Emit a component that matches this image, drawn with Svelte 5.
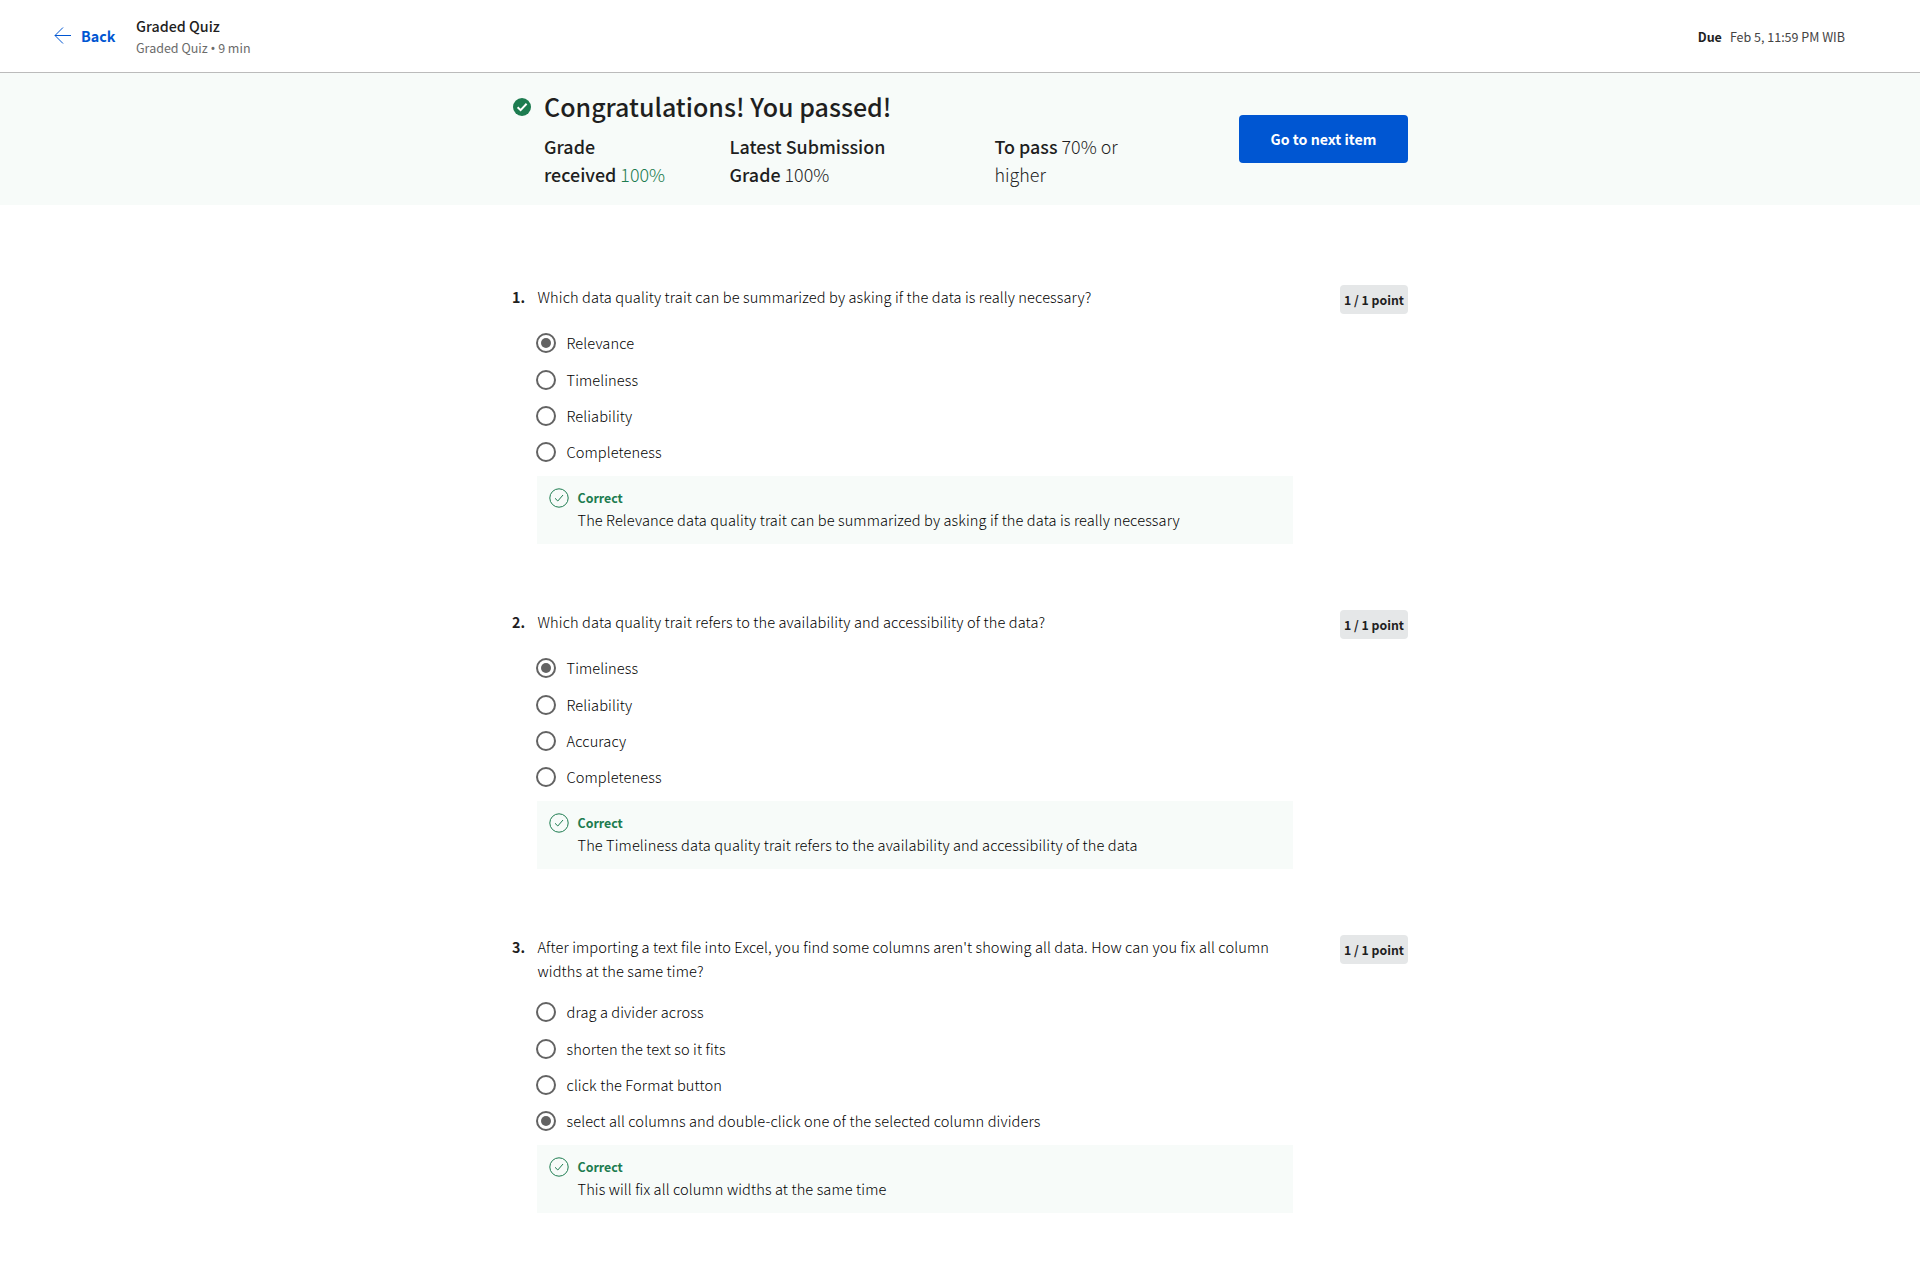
<script>
  const questions = [
    {
      text: 'Which data quality trait can be summarized by asking if the data is really necessary?',
      options: ['Relevance', 'Timeliness', 'Reliability', 'Completeness'],
      picked: 0,
      feedback: 'The Relevance data quality trait can be summarized by asking if the data is really necessary'
    },
    {
      text: 'Which data quality trait refers to the availability and accessibility of the data?',
      options: ['Timeliness', 'Reliability', 'Accuracy', 'Completeness'],
      picked: 0,
      feedback: 'The Timeliness data quality trait refers to the availability and accessibility of the data'
    },
    {
      text: "After importing a text file into Excel, you find some columns aren't showing all data. How can you fix all column widths at the same time?",
      options: [
        'drag a divider across',
        'shorten the text so it fits',
        'click the Format button',
        'select all columns and double-click one of the selected column dividers'
      ],
      picked: 3,
      feedback: 'This will fix all column widths at the same time'
    }
  ];
</script>

<div class="page">
  <header>
    <a class="back" href="#back">
      <svg width="18" height="18" viewBox="0 0 18 18" fill="none" stroke="#0056d2">
        <path d="M17 8.5H1M9 0.5L1 8.5L9 16.5" />
      </svg>
      <span>Back</span>
    </a>
    <div class="title">
      <div class="name">Graded Quiz</div>
      <div class="meta">Graded Quiz <span class="dot">•</span> 9 min</div>
    </div>
    <div class="due"><b>Due</b><span>Feb 5, 11:59 PM WIB</span></div>
  </header>

  <section class="banner">
    <svg class="tick" width="18" height="18" viewBox="0 0 18 18">
      <circle cx="9" cy="9" r="9" fill="#1d7c50" />
      <path d="M4.6 9.3L7.6 12.2L13.6 5.8" fill="none" stroke="#fff" stroke-width="2" />
    </svg>
    <div class="result">
      <h1>Congratulations! You passed!</h1>
      <div class="grades">
        <div class="g1"><b>Grade received</b> <span class="green">100%</span></div>
        <div class="g2"><b>Latest Submission Grade</b> 100%</div>
        <div class="g3"><b>To pass</b> 70% or higher</div>
      </div>
    </div>
    <button>Go to next item</button>
  </section>

  <main>
    {#each questions as q, i}
      <section class="question">
        <div class="num">{i + 1}.</div>
        <div class="body">
          <p class="prompt">{q.text}</p>
          <div class="options">
            {#each q.options as o, j}
              <div class="option">
                <span class="radio" class:on={j === q.picked}></span>
                <span class="label">{o}</span>
              </div>
            {/each}
          </div>
          <div class="feedback">
            <svg width="20" height="20" viewBox="0 0 20 20" fill="none" stroke="#1d7c50">
              <circle cx="10" cy="10" r="9.2" />
              <path d="M6 10.3L8.8 13L14 7" />
            </svg>
            <div>
              <div class="correct">Correct</div>
              <div class="why">{q.feedback}</div>
            </div>
          </div>
        </div>
        <div class="points">1 / 1 point</div>
      </section>
    {/each}
  </main>
</div>

<style>
  :global(body) { margin: 0; background: #fff; }
  .page {
    width: 1920px;
    height: 1277px;
    overflow: hidden;
    font-family: 'Noto Sans CJK SC', 'Noto Sans', sans-serif;
    font-size: 14.3px;
    font-weight: 400;
    color: #1f1f1f;
  }
  b { font-weight: 500; }
  header {
    box-sizing: border-box;
    height: 73px;
    border-bottom: 1px solid #bbb;
    display: flex;
    align-items: center;
    padding: 0 75px 0 54px;
  }
  .back {
    display: flex;
    align-items: center;
    gap: 9px;
    width: 82px;
    color: #0056d2;
    font-weight: 700;
    text-decoration: none;
    white-space: nowrap;
  }
  .back span { padding-bottom: 2px; }
  .title { flex: 1; padding-top: 2px; }
  .name { font-weight: 500; line-height: 22px; }
  .meta { font-size: 12.5px; line-height: 22px; color: #6b6b6b; }
  .dot { font: 13px/1 'Noto Sans', sans-serif; }
  .due { display: flex; gap: 8px; font-size: 12.5px; line-height: 20px; padding-top: 1px; }
  .due span { color: #444; }
  .due b { font-weight: 700; }

  .banner {
    box-sizing: border-box;
    height: 132px;
    background: #f7fbf9;
    padding: 15px 512px 0 513px;
    display: flex;
  }
  .tick { margin-top: 10px; flex: none; }
  .result { margin-left: 13px; flex: 1; }
  h1 { margin: 0; font-size: 25px; line-height: 36px; font-weight: 500; }
  .grades { display: flex; font-size: 17.9px; line-height: 28px; padding-top: 8px; font-weight: 300; }
  .g1 { width: 125px; margin-right: 60.5px; }
  .g2 { width: 180px; margin-right: 85px; }
  .g3 { width: 140px; }
  .green { color: #1d7c50; }
  button {
    width: 169px;
    height: 48px;
    margin-top: 27px;
    padding: 0 0 1px;
    border: 0;
    border-radius: 4px;
    background: #0056d2;
    color: #fff;
    font: 700 14.2px 'Noto Sans CJK SC', 'Noto Sans', sans-serif;
  }

  main { padding: 80px 512px 0; }
  .question { display: flex; align-items: flex-start; margin-bottom: 66px; }
  .num { width: 25px; font-weight: 700; line-height: 24px; }
  .body { width: 756px; }
  .prompt, .label, .why { font-size: 14.6px; font-weight: 300; letter-spacing: 0.105px; color: #000; }
  .prompt { margin: 0; line-height: 24px; min-height: 29px; padding: 0 19.5px 0 0.5px; }
  .options { padding: 17px 0 12px; display: flex; flex-direction: column; gap: 12px; }
  .option { display: flex; align-items: center; height: 24px; gap: 10.5px; margin-left: -1px; }
  .option:first-child { margin-bottom: 1px; }
  .label { line-height: 24px; }
  .radio {
    box-sizing: border-box;
    width: 20px;
    height: 20px;
    border: 2px solid #636363;
    border-radius: 50%;
    display: grid;
    place-items: center;
  }
  .radio.on::after { content: ''; width: 10px; height: 10px; border-radius: 50%; background: #636363; }
  .feedback {
    box-sizing: border-box;
    height: 68px;
    background: #f7fbf9;
    display: flex;
    gap: 8.5px;
    padding: 12px;
  }
  .correct { font-size: 12.4px; line-height: 20px; font-weight: 700; color: #1d7c50; }
  .why { line-height: 24px; }
  .points {
    box-sizing: border-box;
    width: 68px;
    height: 29px;
    padding-top: 1px;
    margin-left: auto;
    border-radius: 4px;
    background: #e5e7e8;
    font-size: 12.3px;
    line-height: 28px;
    font-weight: 700;
    text-align: center;
    white-space: nowrap;
  }
</style>
